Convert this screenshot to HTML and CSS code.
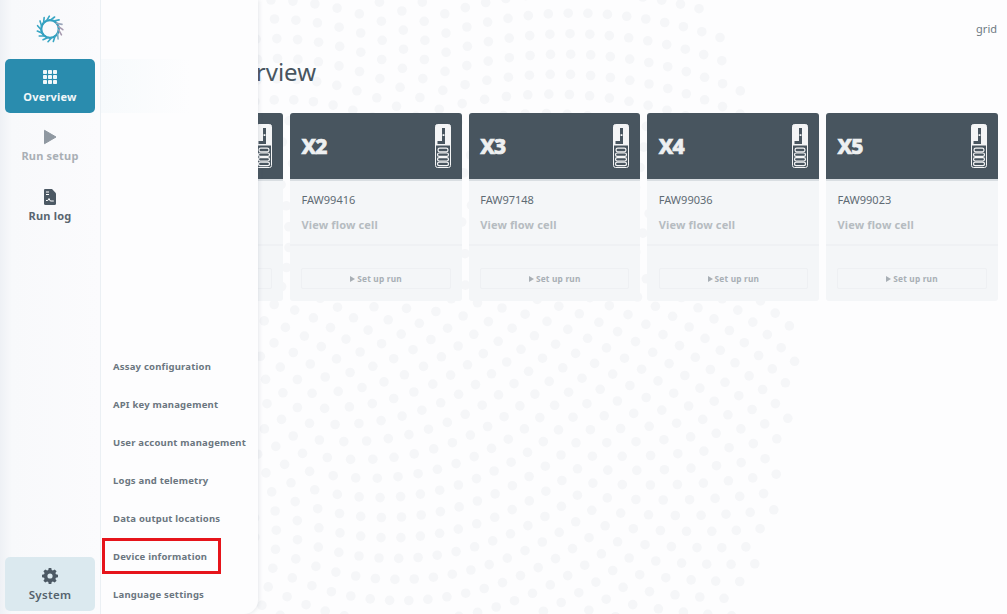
FILE: index.html
```html
<!DOCTYPE html>
<html lang="en">
<head>
<meta charset="utf-8">
<title>Overview</title>
<link rel="stylesheet" href="styles.css">
</head>
<body>
<svg width="0" height="0" class="defs">
  <defs>
    <symbol id="cell" viewBox="0 0 16 44">
      <rect x="0.5" y="0.5" width="15" height="43" rx="2" fill="#48555f" stroke="#f4f5f6"/>
      <path d="M0.5 2.500a2 2 0 0 1 2-2h11a2 2 0 0 1 2 2v19h-15z" fill="#f4f5f6"/>
      <path d="M8.500 4v14.500H2.500" fill="none" stroke="#48555f" stroke-width="3"/>
      <rect x="7.600" y="10.200" width="1.800" height="1.800" fill="#f4f5f6"/>
      <g fill="none" stroke="#f4f5f6" stroke-width="1.200">
        <rect x="3" y="24.200" width="10" height="3.600" rx="1.800"/>
        <rect x="2.500" y="29" width="11" height="3.400" rx="1.700"/>
        <rect x="2.500" y="33.600" width="11" height="3.400" rx="1.700"/>
        <rect x="2.500" y="38.200" width="11" height="3.400" rx="1.700"/>
      </g>
    </symbol>
    <path id="tick" d="M15 6.300L19.600 3"/>
  </defs>
</svg>

<main class="main">
  <div class="topbar"><span class="grid-label">grid</span></div>
  <h1 class="title">Overview</h1>
  <section class="cards">
    <article class="card">
      <header class="card-head"><span class="pos">X1</span><svg class="cell-icon"><use href="#cell"/></svg></header>
      <div class="card-info"><p class="fc-id">FAW99310</p><p class="fc-link">View flow cell</p></div>
      <div class="card-foot"><div class="run-btn"><span class="tri"></span>Set up run</div></div>
    </article>
    <article class="card">
      <header class="card-head"><span class="pos">X2</span><svg class="cell-icon"><use href="#cell"/></svg></header>
      <div class="card-info"><p class="fc-id">FAW99416</p><p class="fc-link">View flow cell</p></div>
      <div class="card-foot"><div class="run-btn"><span class="tri"></span>Set up run</div></div>
    </article>
    <article class="card">
      <header class="card-head"><span class="pos">X3</span><svg class="cell-icon"><use href="#cell"/></svg></header>
      <div class="card-info"><p class="fc-id">FAW97148</p><p class="fc-link">View flow cell</p></div>
      <div class="card-foot"><div class="run-btn"><span class="tri"></span>Set up run</div></div>
    </article>
    <article class="card">
      <header class="card-head"><span class="pos">X4</span><svg class="cell-icon"><use href="#cell"/></svg></header>
      <div class="card-info"><p class="fc-id">FAW99036</p><p class="fc-link">View flow cell</p></div>
      <div class="card-foot"><div class="run-btn"><span class="tri"></span>Set up run</div></div>
    </article>
    <article class="card">
      <header class="card-head"><span class="pos">X5</span><svg class="cell-icon"><use href="#cell"/></svg></header>
      <div class="card-info"><p class="fc-id">FAW99023</p><p class="fc-link">View flow cell</p></div>
      <div class="card-foot"><div class="run-btn"><span class="tri"></span>Set up run</div></div>
    </article>
  </section>
</main>

<aside class="drawer">
  <nav class="drawer-menu">
    <a class="drawer-item">Assay configuration</a>
    <a class="drawer-item">API key management</a>
    <a class="drawer-item">User account management</a>
    <a class="drawer-item">Logs and telemetry</a>
    <a class="drawer-item">Data output locations</a>
    <a class="drawer-item highlighted">Device information</a>
    <a class="drawer-item">Language settings</a>
  </nav>
</aside>

<aside class="rail">
  <div class="logo">
    <svg width="30" height="30" viewBox="0 0 30 30">
      <circle cx="15" cy="15" r="8.800" fill="none" stroke="#2f9dbd" stroke-width="2.300"/>
      <g stroke="#38a6c4" stroke-width="1.600" stroke-linecap="round">
        <use href="#tick"/>
        <use href="#tick" transform="rotate(24 15 15)"/>
        <use href="#tick" transform="rotate(48 15 15)" stroke="#9aa6ba"/>
        <use href="#tick" transform="rotate(72 15 15)" stroke="#a79bb0"/>
        <use href="#tick" transform="rotate(96 15 15)" stroke="#a79bb0"/>
        <use href="#tick" transform="rotate(120 15 15)" stroke="#7fb0c4"/>
        <use href="#tick" transform="rotate(144 15 15)"/>
        <use href="#tick" transform="rotate(168 15 15)"/>
        <use href="#tick" transform="rotate(192 15 15)"/>
        <use href="#tick" transform="rotate(216 15 15)"/>
        <use href="#tick" transform="rotate(240 15 15)"/>
        <use href="#tick" transform="rotate(264 15 15)"/>
        <use href="#tick" transform="rotate(288 15 15)"/>
        <use href="#tick" transform="rotate(312 15 15)"/>
        <use href="#tick" transform="rotate(336 15 15)"/>
      </g>
    </svg>
  </div>
  <a class="rail-item active">
    <svg class="rail-icon" width="14" height="14" viewBox="0 0 14 14" fill="currentColor">
      <rect x="0" y="0" width="4" height="4" rx=".8"/><rect x="5" y="0" width="4" height="4" rx=".8"/><rect x="10" y="0" width="4" height="4" rx=".8"/>
      <rect x="0" y="5" width="4" height="4" rx=".8"/><rect x="5" y="5" width="4" height="4" rx=".8"/><rect x="10" y="5" width="4" height="4" rx=".8"/>
      <rect x="0" y="10" width="4" height="4" rx=".8"/><rect x="5" y="10" width="4" height="4" rx=".8"/><rect x="10" y="10" width="4" height="4" rx=".8"/>
    </svg>
    <span>Overview</span>
  </a>
  <a class="rail-item muted">
    <svg class="rail-icon" width="14" height="16" viewBox="0 0 14 16"><path d="M1.500 1.300L13 8 1.500 14.700z" fill="#8f98a1" stroke="#8f98a1" stroke-linejoin="round"/></svg>
    <span>Run setup</span>
  </a>
  <a class="rail-item dark">
    <svg class="rail-icon" width="14" height="16" viewBox="0 0 14 16">
      <path d="M2 0h7l4 4.200V14.500a1.500 1.500 0 0 1-1.500 1.500h-9A1.500 1.500 0 0 1 1 14.500V1a1 1 0 0 1 1-1z" fill="#4c5964"/>
      <path d="M3 3h3M3 5.500h3" stroke="#fff" stroke-width="1"/>
      <path d="M3 11.500h1.800l1.200-2 1.300 2.500h3.500" fill="none" stroke="#fff" stroke-width="1"/>
    </svg>
    <span>Run log</span>
  </a>
  <a class="rail-item system">
    <svg class="rail-icon" width="16" height="16" viewBox="0 0 16 16">
      <path fill="#4c5964" fill-rule="evenodd" d="M6.700 0h2.600l.4 2.100 1.200.5L12.700 1.400l1.900 1.900-1.200 1.800.5 1.200 2.100.4v2.600l-2.100.4-.5 1.200 1.200 1.800-1.900 1.900-1.800-1.200-1.200.5-.4 2.100H6.700l-.4-2.100-1.200-.5-1.800 1.200-1.900-1.900 1.200-1.800-.5-1.200L0 9.300V6.700l2.100-.4.500-1.200L1.400 3.300l1.900-1.900 1.800 1.200 1.200-.5zM8 5.400a2.600 2.600 0 1 0 0 5.200 2.600 2.600 0 0 0 0-5.200z"/>
    </svg>
    <span>System</span>
  </a>
</aside>
<script src="dots.js"></script>
</body>
</html>
```
FILE: styles.css
```css
*, *::after { box-sizing: border-box; }
html, body { height: 100%; }
body {
  margin: 0;
  height: 614px;
  overflow: hidden;
  background: #fdfdfe;
  font-family: "Noto Sans", "Open Sans", sans-serif;
  color: #48555f;
  position: relative;
}
.defs { position: absolute; }
.dots { position: absolute; left: 0; top: 0; }
.dots circle { fill: #f5f6f8; }

/* main area */
.main {
  position: relative;
  padding: 0 9px 0 111.330px;
  height: 614px;
}
.topbar { display: flex; justify-content: flex-end; height: 40px; padding: 21px 1px 0 0; }
.grid-label { font-size: 11px; line-height: 16px; color: #6d7982; }
.title {
  margin: 16px 0 0 100px;
  font-size: 24px;
  line-height: 32px;
  font-weight: 400;
  color: #48555f;
  height: 57px;
}
.cards { display: flex; gap: 7px; }
.card {
  width: 171.670px;
  height: 188px;
  background: #f4f6f8;
  border-radius: 3px;
  display: flex;
  flex-direction: column;
  flex: none;
}
.card-head {
  height: 66px;
  background: #48555f;
  box-shadow: 0 2px 0 #d9dee2;
  border-radius: 3px 3px 0 0;
  display: flex;
  align-items: flex-start;
  justify-content: space-between;
  padding: 11px 11px 0 11.500px;
}
.pos {
  font-size: 21px;
  line-height: 44px;
  font-weight: 800;
  color: #eef0f1;
  letter-spacing: -0.8px;
  -webkit-text-stroke: 0.7px #eef0f1;
}
.cell-icon { width: 16px; height: 44px; }
.card-info { height: 67px; padding: 11px 11.500px 0; border-bottom: 2px solid #eff1f4; }
.fc-id { margin: 0; font-size: 11px; line-height: 20px; color: #5f6b74; }
.fc-link {
  margin: 5px 0 0;
  font-size: 11px;
  line-height: 20px;
  font-weight: 700;
  letter-spacing: 0.15px;
  color: #b6bcc1;
}
.card-foot { padding: 22px 11px 0 11.500px; }
.run-btn {
  height: 21px;
  border: 1px solid #eef0f3;
  border-radius: 2px;
  display: flex;
  align-items: center;
  justify-content: center;
  gap: 2px;
  font-size: 8.300px;
  font-weight: 700;
  letter-spacing: 0.2px;
  color: #a8afb5;
}
.tri {
  width: 0;
  height: 0;
  border-left: 5px solid #a8afb5;
  border-top: 3px solid transparent;
  border-bottom: 3px solid transparent;
}

/* left rail */
.rail {
  position: absolute;
  left: 0;
  top: 0;
  width: 101px;
  height: 614px;
  background: linear-gradient(90deg, #eef1f5 0, #f8f9fb 12px, #fbfbfd 100%);
  border-right: 1px solid #ebf0f4;
  display: flex;
  flex-direction: column;
  align-items: flex-start;
  padding: 0 0 3px 5px;
}
.logo { height: 59px; width: 90px; display: flex; justify-content: center; padding-top: 14px; }
.rail-item {
  width: 90px;
  height: 54px;
  margin-bottom: 6px;
  border-radius: 5px;
  display: flex;
  flex-direction: column;
  align-items: center;
  justify-content: flex-start;
  padding-top: 11px;
  font-size: 11px;
  line-height: 16px;
  font-weight: 700;
  letter-spacing: 0.2px;
}
.rail-icon { display: block; margin-bottom: 5px; flex: none; }
.rail-item.active { background: #2a8cae; color: #f1f7f9; }
.rail-item.muted { color: #a9afb5; }
.rail-item.muted, .rail-item.dark { padding-top: 10px; }
.rail-item.dark { color: #5a6670; }
.rail-item.muted .rail-icon { margin-bottom: 3px; }
.rail-item.dark .rail-icon { margin-bottom: 3px; }
.rail-item.system {
  margin-top: auto;
  margin-bottom: 0;
  background: #dbe9ef;
  color: #55626c;
  font-size: 11.500px;
  font-weight: 600;
  letter-spacing: 0.3px;
  padding-top: 11px;
}
.rail-item.system .rail-icon { margin-bottom: 3px; }

/* drawer over the content */
.drawer {
  position: absolute;
  left: 100px;
  top: 0;
  width: 158px;
  height: 614px;
  background: linear-gradient(90deg, #f7fafc, #fdfdfe 90px) no-repeat 0 59px / 158px 54px, #fdfdfe;
  border-radius: 0 0 14px 0;
  box-shadow: 1px 0 4px rgba(90, 105, 120, 0.14);
  display: flex;
  flex-direction: column;
  justify-content: flex-end;
}
.drawer-menu { display: flex; flex-direction: column; }
.drawer-item {
  position: relative;
  height: 38px;
  padding-left: 13px;
  font-size: 9.500px;
  line-height: 38px;
  font-weight: 700;
  letter-spacing: 0.2px;
  color: #6b7680;
  white-space: nowrap;
}
.drawer-item.highlighted::after {
  content: "";
  position: absolute;
  left: 2px;
  top: 0;
  width: 119px;
  height: 36px;
  border: 3px solid #e6141b;
}
```
FILE: dots.js
```js
// Background: a phyllotaxis disc of faint dots
var NS = "http://www.w3.org/2000/svg";
var svg = document.createElementNS(NS, "svg");
svg.setAttribute("class", "dots");
svg.setAttribute("width", "1007");
svg.setAttribute("height", "614");
var cx = 100, cy = 345, c = 11.4, radius = 695, golden = Math.PI * (3 - Math.sqrt(5));
for (var n = 1; c * Math.sqrt(n) < radius; n++) {
  var r = c * Math.sqrt(n), a = n * golden;
  var x = cx + r * Math.cos(a), y = cy + r * Math.sin(a);
  if (x < 250 || x > 1007 || y < -6 || y > 620) continue;
  var dot = document.createElementNS(NS, "circle");
  dot.setAttribute("cx", x.toFixed(1));
  dot.setAttribute("cy", y.toFixed(1));
  dot.setAttribute("r", "4.8");
  svg.appendChild(dot);
}
document.body.insertBefore(svg, document.body.firstChild);
```
